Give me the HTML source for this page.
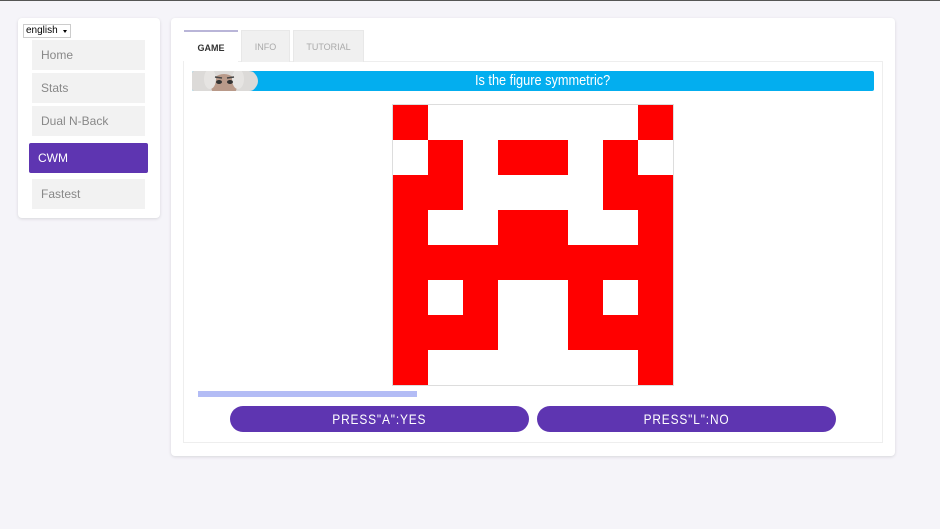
<!DOCTYPE html>
<html><head><meta charset="utf-8"><style>
*{margin:0;padding:0;box-sizing:border-box}
body{width:940px;height:529px;background:#f5f4f9;font-family:"Liberation Sans",sans-serif;position:relative;overflow:hidden}
.top{position:absolute;left:0;top:0;width:940px;height:1px;background:#555}
.card{position:absolute;background:#fff;border-radius:4px;box-shadow:0 1px 3px rgba(0,0,0,.12)}
.sel{position:absolute;left:23px;top:24px;width:48px;height:14px;border:1px solid #ccc;font-size:10px;line-height:12px;padding-left:2px;color:#000;background:#fff}
.sel:after{content:"";position:absolute;right:3px;top:5px;border:2px solid transparent;border-top:3px solid #000}
.nav{position:absolute;left:32px;width:113px;height:30px;background:#f2f2f2;color:#888;font-size:12px;line-height:30px;padding-left:9px}
.nav.act{left:29px;width:119px;background:#5e35b1;color:#fff;border-radius:2px;padding-left:9px}
.tab{position:absolute;top:30px;height:32px;background:#f0f0f0;color:#aaa;font-size:9px;line-height:32px;text-align:center;border:1px solid #e8e8e8;border-bottom:none}
.tab.act{background:#fff;color:#333;font-weight:bold;border:none;border-top:2px solid #b9b5d8;z-index:2}
.panel{position:absolute;left:183px;top:61px;width:700px;height:382px;border:1px solid #eee;background:#fff}
.bar{position:absolute;left:192px;top:71px;width:682px;height:20px;background:#03aeef;border-radius:2px;color:#fff;font-size:15px;line-height:20px;text-align:center;padding-left:20px}
.bar span,.btn span{display:inline-block;transform:scaleX(.85)}
.face{position:absolute;left:192px;top:71px;width:67px;height:20px;overflow:hidden;border-radius:2px 10px 10px 2px}
.grid{position:absolute;left:393px;top:105px;width:280px;height:280px;outline:1px solid #ddd;background:#fff}
.grid div{position:absolute;width:35px;height:35px;background:#f00}
.prog{position:absolute;left:198px;top:391px;width:219px;height:6px;background:#b3bcf5}
.btn{position:absolute;top:406px;width:299px;height:26px;background:#5e35b1;border-radius:13px;color:#fff;font-size:14px;line-height:26px;text-align:center;letter-spacing:1px}
</style></head><body>
<div class="top"></div>
<div class="card" style="left:18px;top:18px;width:142px;height:200px"></div>
<div class="sel">english</div>
<div class="nav" style="top:40px">Home</div>
<div class="nav" style="top:73px">Stats</div>
<div class="nav" style="top:106px">Dual N-Back</div>
<div class="nav act" style="top:143px">CWM</div>
<div class="nav" style="top:179px">Fastest</div>

<div class="card" style="left:171px;top:18px;width:724px;height:438px"></div>
<div class="panel"></div>
<div class="tab act" style="left:184px;width:54px">GAME</div>
<div class="tab" style="left:241px;width:49px">INFO</div>
<div class="tab" style="left:293px;width:71px">TUTORIAL</div>
<div class="bar"><span>Is the figure symmetric?</span></div>
<div class="face"><svg width="67" height="20"><rect width="67" height="20" fill="#03aeef"/><ellipse cx="30" cy="10" rx="36" ry="18" fill="#dcdad8"/><ellipse cx="32" cy="15" rx="13" ry="12" fill="#b99a8a"/><ellipse cx="18" cy="8" rx="6" ry="10" fill="#e6e4e2"/><ellipse cx="46" cy="8" rx="6" ry="10" fill="#e6e4e2"/><ellipse cx="27" cy="11" rx="3" ry="2" fill="#333"/><ellipse cx="38" cy="11" rx="3" ry="2" fill="#333"/><path d="M23 6 L30 7 M35 7 L42 6" stroke="#444" stroke-width="1.5"/></svg></div>

<div class="grid">
<div style="left:0;top:0"></div><div style="left:245px;top:0"></div>
<div style="left:35px;top:35px"></div><div style="left:105px;top:35px;width:70px"></div><div style="left:210px;top:35px"></div>
<div style="left:0;top:70px;width:70px"></div><div style="left:210px;top:70px;width:70px"></div>
<div style="left:0;top:105px"></div><div style="left:105px;top:105px;width:70px"></div><div style="left:245px;top:105px"></div>
<div style="left:0;top:140px;width:280px"></div>
<div style="left:0;top:175px;height:105px"></div><div style="left:70px;top:175px;height:70px"></div><div style="left:175px;top:175px;height:70px"></div><div style="left:245px;top:175px;height:105px"></div>
<div style="left:0;top:210px;width:105px"></div><div style="left:175px;top:210px;width:105px"></div>
</div>
<div class="prog"></div>
<div class="btn" style="left:230px"><span>PRESS"A":YES</span></div>
<div class="btn" style="left:537px"><span>PRESS"L":NO</span></div>
</body></html>
